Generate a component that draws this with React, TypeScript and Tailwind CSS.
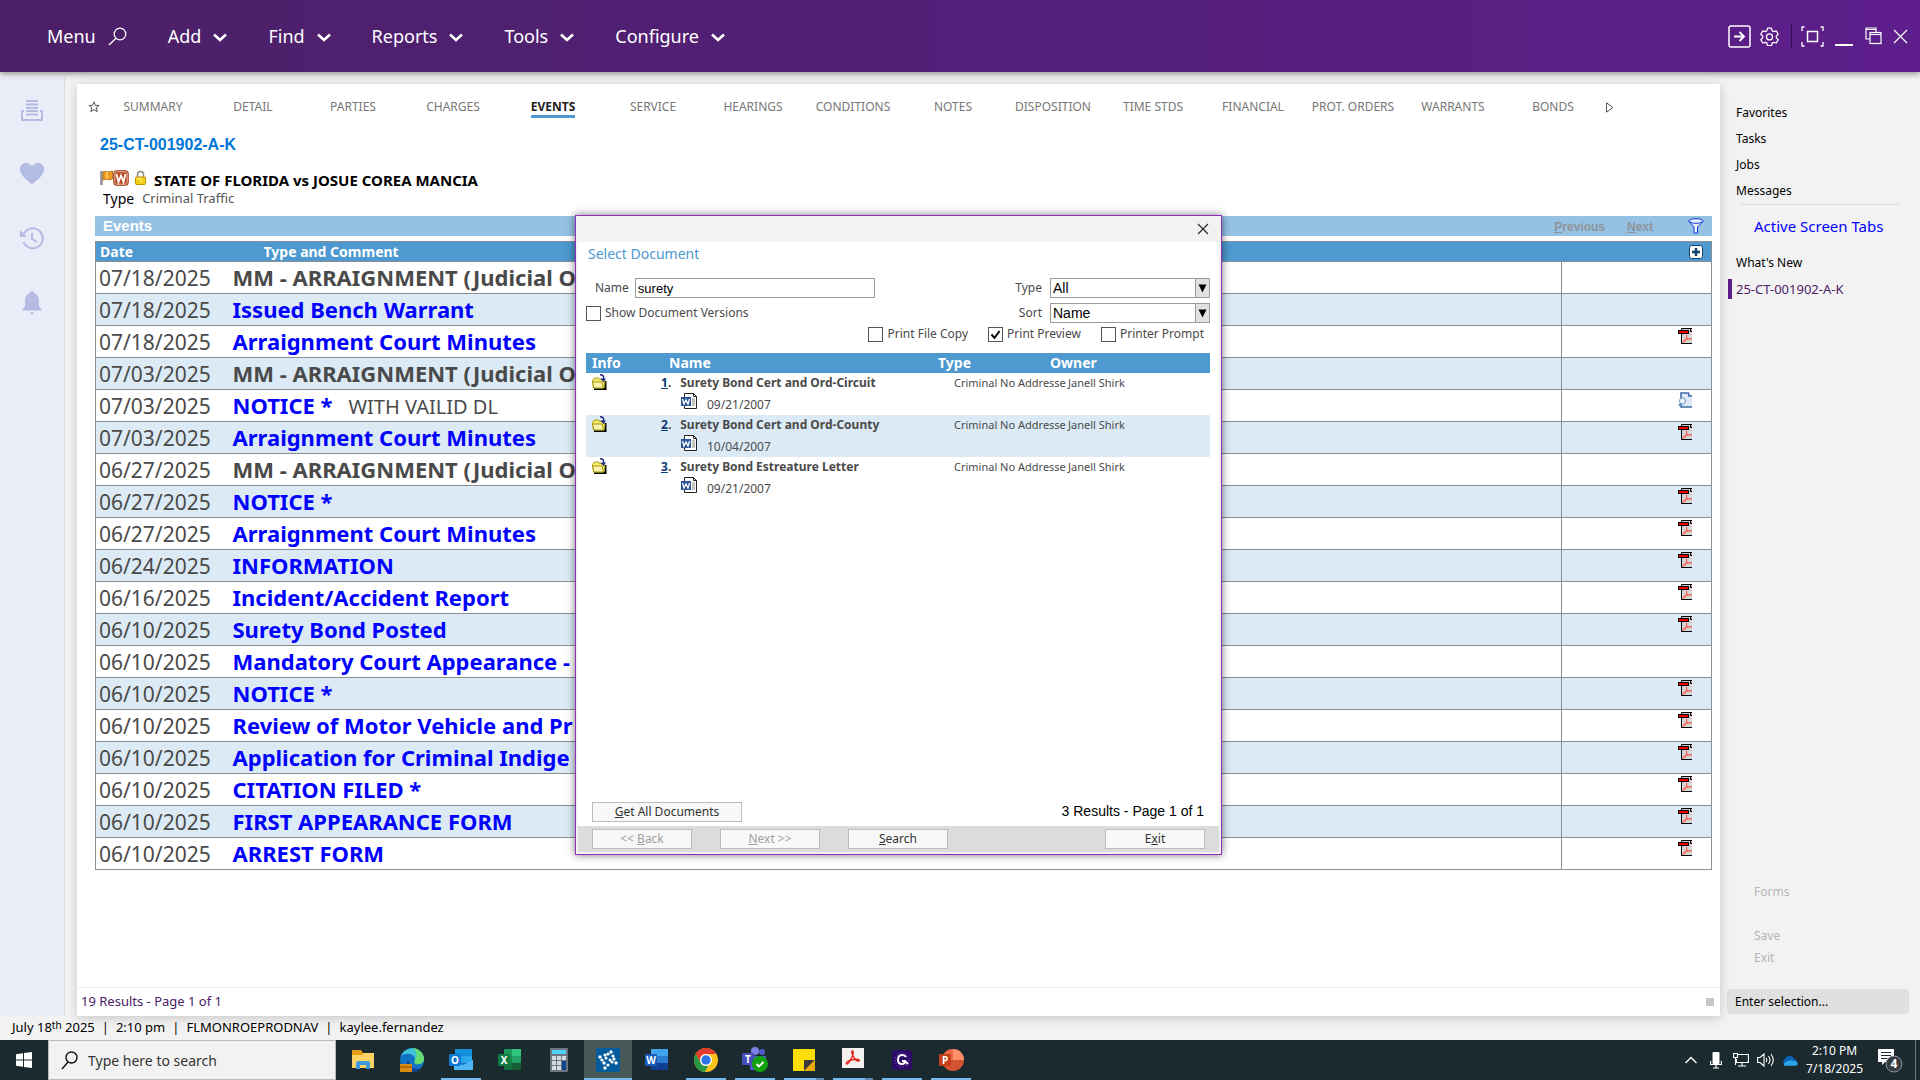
import React from 'react'

type EventRow = {
  date: string
  title: string
  note?: string
  link?: boolean
  icon?: 'pdf' | 'doc'
}

const menus = ['Add', 'Find', 'Reports', 'Tools', 'Configure']

const tabs = [
  'SUMMARY', 'DETAIL', 'PARTIES', 'CHARGES', 'EVENTS', 'SERVICE', 'HEARINGS', 'CONDITIONS',
  'NOTES', 'DISPOSITION', 'TIME STDS', 'FINANCIAL', 'PROT. ORDERS', 'WARRANTS', 'BONDS',
]

const events: EventRow[] = [
  { date: '07/18/2025', title: 'MM - ARRAIGNMENT (Judicial O' },
  { date: '07/18/2025', title: 'Issued Bench Warrant', link: true },
  { date: '07/18/2025', title: 'Arraignment Court Minutes', link: true, icon: 'pdf' },
  { date: '07/03/2025', title: 'MM - ARRAIGNMENT (Judicial O' },
  { date: '07/03/2025', title: 'NOTICE *', note: 'WITH VAILID DL', link: true, icon: 'doc' },
  { date: '07/03/2025', title: 'Arraignment Court Minutes', link: true, icon: 'pdf' },
  { date: '06/27/2025', title: 'MM - ARRAIGNMENT (Judicial O' },
  { date: '06/27/2025', title: 'NOTICE *', link: true, icon: 'pdf' },
  { date: '06/27/2025', title: 'Arraignment Court Minutes', link: true, icon: 'pdf' },
  { date: '06/24/2025', title: 'INFORMATION', link: true, icon: 'pdf' },
  { date: '06/16/2025', title: 'Incident/Accident Report', link: true, icon: 'pdf' },
  { date: '06/10/2025', title: 'Surety Bond Posted', link: true, icon: 'pdf' },
  { date: '06/10/2025', title: 'Mandatory Court Appearance -', link: true },
  { date: '06/10/2025', title: 'NOTICE *', link: true, icon: 'pdf' },
  { date: '06/10/2025', title: 'Review of Motor Vehicle and Pr', link: true, icon: 'pdf' },
  { date: '06/10/2025', title: 'Application for Criminal Indige', link: true, icon: 'pdf' },
  { date: '06/10/2025', title: 'CITATION FILED *', link: true, icon: 'pdf' },
  { date: '06/10/2025', title: 'FIRST APPEARANCE FORM', link: true, icon: 'pdf' },
  { date: '06/10/2025', title: 'ARREST FORM', link: true, icon: 'pdf' },
]

const documents = [
  { name: 'Surety Bond Cert and Ord-Circuit', date: '09/21/2007' },
  { name: 'Surety Bond Cert and Ord-County', date: '10/04/2007' },
  { name: 'Surety Bond Estreature Letter', date: '09/21/2007' },
]

/* ---------- small icons ---------- */

function Chevron() {
  return (
    <svg width="14" height="10" viewBox="0 0 14 10" fill="none" stroke="white" strokeWidth="2.6" className="mt-1">
      <path d="M1 1.500 7 7l6-5.500" />
    </svg>
  )
}

function PdfIcon() {
  return (
    <svg width="14" height="16" viewBox="0 0 14 16">
      <path d="M3.500.5H14v15H3.500z" fill="#d4d4d4" />
      <path d="M14 .5H3.500v15H14" fill="none" stroke="#000" />
      <path d="M12.500 0v3.500H14" fill="#e00" stroke="#000" />
      <rect x=".5" y="2.500" width="10" height="3" fill="#f00000" stroke="#000" />
      <path d="M8.500 6.500v3c0 2-2 4-4 5M8.500 9c1 2 3 3 5.500 1.500M5.500 12.500c3-2 5-2 8.500-1.500" fill="none" stroke="#f46a5e" strokeWidth="1.200" />
    </svg>
  )
}

function DocIcon() {
  return (
    <svg width="14" height="16" viewBox="0 0 14 16">
      <path d="M3 1h8l3 3v11H3z" fill="#dfe8f6" />
      <path d="M3 6V1h7.500l.5 3h3M3 12v3h11" fill="none" stroke="#3e6ba5" strokeWidth="1.600" />
      <circle cx="4.500" cy="9" r="3" fill="#eef6fc" stroke="#6f93bd" />
      <path d="M2.500 11.500.5 14" stroke="#6f93bd" strokeWidth="1.500" />
    </svg>
  )
}

function FolderIcon() {
  return (
    <svg width="16" height="16" viewBox="0 0 16 16">
      <path d="M2 15h11.500V7" fill="none" stroke="#000" strokeWidth="2" />
      <path d="M.5 6.500 2.500 4h4l1 1.500H12V8h1l-1 6H1.500z" fill="#f7ea6c" stroke="#a39a10" />
      <path d="M.5 8h9.500l1.500 6H2z" fill="#fdf3b0" stroke="#a39a10" />
      <path d="M8 .8c3 0 4 1 3.500 4" fill="none" stroke="#1d2a80" strokeWidth="1.500" />
      <path d="M8.500 4.500h5.500L11.500 8z" fill="#1d2a80" />
    </svg>
  )
}

function WordDocIcon() {
  return (
    <svg width="16" height="16" viewBox="0 0 16 16">
      <path d="M3.500.5h9l3 3v12h-12z" fill="#fff" stroke="#222" />
      <path d="M12.500.5v3h3" fill="none" stroke="#222" />
      <path d="M11 6h3M11 8h3M11 10h3M11 12h3" stroke="#888" />
      <rect x="0" y="4" width="10" height="9" fill="#2a5699" />
      <path d="M1.500 6l1.500 5 2-4 2 4L8.500 6" fill="none" stroke="#fff" strokeWidth="1.300" />
    </svg>
  )
}

function FlagIcon() {
  return (
    <svg width="13" height="16" viewBox="0 0 13 16">
      <path d="M1.500 1v14" stroke="#8d8d8d" strokeWidth="2.500" />
      <path d="M3 2c3-1.500 4 1 9.500-1v8C8 11 6 8 3 10z" fill="#f19a1c" stroke="#a9650c" strokeWidth=".8" />
      <path d="M7 2v7" stroke="#ffd27a" strokeWidth="1.500" />
    </svg>
  )
}

function WarrantIcon() {
  return (
    <svg width="16" height="16" viewBox="0 0 16 16">
      <rect x=".8" y=".8" width="14.400" height="14.400" rx="2.500" fill="#b8491f" stroke="#8c2f0e" />
      <rect x="1.800" y="1.800" width="12.400" height="12.400" rx="1.500" fill="none" stroke="#e9b9a4" />
      <path d="M3.500 4l2 8L8 5.500 10.500 12l2-8" fill="none" stroke="#fff" strokeWidth="1.800" />
    </svg>
  )
}

function LockIcon() {
  return (
    <svg width="11" height="16" viewBox="0 0 11 16">
      <path d="M2.500 8V4.500a3 3 0 0 1 6 0V8" fill="none" stroke="#8f8f86" strokeWidth="1.500" />
      <rect x=".5" y="7" width="10" height="7.500" rx="1" fill="#f4cf16" stroke="#b89000" />
      <path d="M2 8.500h4v4" fill="none" stroke="#fff3a0" />
    </svg>
  )
}

function FunnelIcon() {
  return (
    <svg width="16" height="16" viewBox="0 0 16 16" fill="#e8f2fb" stroke="#1430e0">
      <path d="M1 3.500 6 9v6h3.500V9L15 3.500z" />
      <ellipse cx="8" cy="3" rx="7" ry="2.300" />
    </svg>
  )
}

/* ---------- top bar ---------- */

function TopBar() {
  return (
    <header className="relative z-10 flex h-[72px] shrink-0 items-center justify-between bg-linear-to-r from-[#4b2067] via-[#531f78] to-[#5d1e8b] pr-3 pl-[47px] text-white shadow-[0_2px_6px_rgba(0,0,0,0.4)]">
      <nav className="flex items-center gap-[41px] text-[18px]">
        <button className="flex items-center gap-3">
          Menu
          <svg width="19" height="19" viewBox="0 0 19 19" fill="none" stroke="white" strokeWidth="1.300">
            <circle cx="12" cy="7" r="5.800" />
            <path d="M8 11.200 1 18" />
          </svg>
        </button>
        {menus.map((menu) => (
          <button key={menu} className="flex items-center gap-3">
            {menu}
            <Chevron />
          </button>
        ))}
      </nav>

      <div className="flex items-center">
        <button aria-label="Go" className="mr-[9px]">
          <svg width="23" height="23" viewBox="0 0 23 23" fill="none" stroke="white" strokeWidth="1.500">
            <rect x="1" y="1" width="21" height="21" rx="2" />
            <path d="M6 11.500h10M11.500 7l4.500 4.500-4.500 4.500" strokeWidth="1.800" />
          </svg>
        </button>
        <button aria-label="Settings" className="mr-3">
          <svg width="19" height="19" viewBox="0 0 24 24" fill="none" stroke="white" strokeWidth="1.600" strokeLinejoin="round">
            <path d="M9.500 1.500h5l.8 3.300 2 1.100 3.200-1 2.500 4.300-2.400 2.300v2.200l2.400 2.300-2.500 4.200-3.200-.9-2 1.100-.8 3.200h-5l-.8-3.200-2-1.100-3.200.9L1 16l2.400-2.300v-2.200L1 9.200l2.500-4.300 3.200 1 2-1.100z" />
            <circle cx="12" cy="12.500" r="3.800" />
          </svg>
        </button>
        <div className="mr-[9px] h-6 w-px bg-[#35105a]" />
        <button aria-label="Full screen" className="mr-[11px]">
          <svg width="23" height="21" viewBox="0 0 23 21" fill="none" stroke="white" strokeWidth="1.300">
            <path d="M3.500 1H1v4M19.500 1H22v4M3.500 20H1v-4M19.500 20H22v-4" />
            <rect x="6.500" y="5.500" width="10" height="10" strokeWidth="1.500" />
          </svg>
        </button>
        <button aria-label="Minimize" className="mr-3 flex h-5 items-end">
          <span className="block h-0.5 w-[18px] bg-white" />
        </button>
        <button aria-label="Restore" className="mr-[11px]">
          <svg width="17" height="18" viewBox="0 0 17 18" fill="none" stroke="white" strokeWidth="1.200">
            <path d="M5 12H1V1h10v4M1 2.500h10" />
            <rect x="5" y="5.500" width="11" height="11" />
            <path d="M5 7.500h11" />
          </svg>
        </button>
        <button aria-label="Close">
          <svg width="15" height="15" viewBox="0 0 15 15" fill="none" stroke="white" strokeWidth="1.200">
            <path d="M1 1l13 13M14 1 1 14" />
          </svg>
        </button>
      </div>
    </header>
  )
}

/* ---------- left rail ---------- */

function LeftRail() {
  return (
    <aside className="flex w-[65px] shrink-0 flex-col items-center gap-10 border-r border-[#d9dae0] bg-[#eaecf8] pt-5 text-[#b4bbe4]">
      <button aria-label="Documents">
        <svg width="24" height="24" viewBox="0 0 24 24" fill="none" stroke="currentColor" strokeWidth="2">
          <path d="M6 3h12M6 6.500h12M6 10h12M6 13h12M6 16.500h12" />
          <path d="M4 13H2v9h20v-9h-2" />
        </svg>
      </button>
      <button aria-label="Favorites">
        <svg width="24" height="24" viewBox="0 0 24 24" fill="currentColor">
          <path d="M12 22.500C7 18 0 13 0 7.500 0 3.500 2.800 1 6 1c2.500 0 4.700 1.300 6 3.500C13.300 2.300 15.500 1 18 1c3.200 0 6 2.500 6 6.500 0 5.500-7 10.500-12 15z" />
        </svg>
      </button>
      <button aria-label="History">
        <svg width="24" height="24" viewBox="0 0 24 24" fill="none" stroke="currentColor" strokeWidth="2">
          <path d="M4 7.500A10 10 0 1 1 3.500 16" />
          <path d="M0 4v7h7z" fill="currentColor" stroke="none" />
          <path d="M12 7v6l5 3" />
        </svg>
      </button>
      <button aria-label="Alerts">
        <svg width="24" height="26" viewBox="0 0 24 26" fill="currentColor">
          <path d="M12 1c1.200 0 1.800.9 1.800 2C17.500 4 19 7 19 11v5l3 4.500H2L5 16v-5c0-4 1.500-7 5.200-8 0-1.100.6-2 1.800-2zM10 22.500h4c0 1.200-.8 2-2 2s-2-.8-2-2z" />
        </svg>
      </button>
    </aside>
  )
}

/* ---------- events ---------- */

function EventsTable() {
  return (
    <table className="w-full table-fixed border-collapse border border-[#8c8f92] text-[#4a4a4a]">
      <colgroup>
        <col className="w-[134px]" />
        <col />
        <col className="w-[150px]" />
      </colgroup>
      <thead>
        <tr className="h-[19px] bg-[#4d99d0] text-left text-[14px] leading-[19px] text-white">
          <th className="p-0 pl-1">Date</th>
          <th className="p-0 pl-[34px]">Type and Comment</th>
          <th className="p-0 pr-2">
            <button aria-label="Add event" className="ml-auto block">
              <svg width="14" height="14" viewBox="0 0 14 14">
                <rect x=".5" y=".5" width="13" height="13" rx="2" fill="#fff" stroke="#12406b" />
                <path d="M7 3v8M3 7h8" stroke="#12406b" strokeWidth="2.500" />
              </svg>
            </button>
          </th>
        </tr>
      </thead>
      <tbody>
        {events.map((row, i) => (
          <tr key={i} className="h-8 border border-[#8c8f92] bg-white text-[21px] leading-[30px] even:bg-[#dceaf5]">
            <td className="p-0 pl-[3px]">{row.date}</td>
            <td className="overflow-hidden border-r border-[#8c8f92] p-0 pl-[3px] whitespace-nowrap">
              {row.link ? (
                <a href="#" className="text-[22px] leading-none font-bold text-[#0000ff]">{row.title}</a>
              ) : (
                <b className="text-[22px] leading-none">{row.title}</b>
              )}
              {row.note && <span className="ml-4 text-[20px] leading-none">{row.note}</span>}
            </td>
            <td className="p-0 pt-0.5 pr-[19px] align-top">
              {row.icon && (
                <button aria-label="Open document" className="ml-auto block">
                  {row.icon === 'pdf' ? <PdfIcon /> : <DocIcon />}
                </button>
              )}
            </td>
          </tr>
        ))}
      </tbody>
    </table>
  )
}

/* ---------- select document dialog ---------- */

function CheckField({ id, label, checked }: { id: string; label: string; checked?: boolean }) {
  return (
    <div className="flex items-center gap-1">
      <span className="relative flex">
        <input
          id={id}
          type="checkbox"
          defaultChecked={checked}
          className="peer size-[15px] appearance-none border border-[#555] bg-white"
        />
        <svg className="pointer-events-none absolute inset-0 hidden peer-checked:block" width="15" height="15" viewBox="0 0 15 15" fill="none" stroke="#000" strokeWidth="2">
          <path d="M3.500 7.500l3 3.500 5-7" />
        </svg>
      </span>
      <label htmlFor={id}>{label}</label>
    </div>
  )
}

function SelectField({ id, label, value }: { id: string; label: string; value: string }) {
  return (
    <div className="flex items-center gap-2">
      <label htmlFor={id}>{label}</label>
      <div className="relative">
        <select
          id={id}
          defaultValue={value}
          className="block h-5 w-40 appearance-none border border-[#9b9b9b] bg-white pl-0.5 font-['Liberation_Sans',sans-serif] text-[14px] leading-[18px] text-black"
        >
          <option>{value}</option>
        </select>
        <span className="pointer-events-none absolute inset-y-px right-px flex w-[14px] items-center justify-center border-l border-[#9b9b9b] bg-[#e1e1e1]">
          <svg width="9" height="9" viewBox="0 0 9 9">
            <path d="M.5.5h8l-4 8z" />
          </svg>
        </span>
      </div>
    </div>
  )
}

function DialogButton({ className, disabled, children }: { className: string; disabled?: boolean; children: React.ReactNode }) {
  return (
    <button
      disabled={disabled}
      className={`h-5 border border-[#bcbcbc] bg-[#f8f8f8] text-[12px] leading-[18px] text-[#333] disabled:text-[#a0a0a0] ${className}`}
    >
      {children}
    </button>
  )
}

function SelectDocumentDialog() {
  return (
    <div
      role="dialog"
      aria-label="Select Document"
      className="absolute inset-x-0 top-[131px] z-20 mx-auto flex h-[640px] w-[647px] flex-col border border-[#8f2fbf] bg-[#f2f2f2] p-0.5 pt-0 text-[12px] text-[#4a4a4a] shadow-[0_0_8px_rgba(0,0,0,0.55)]"
    >
      <div className="flex h-[26px] shrink-0 items-center justify-end pr-2.5">
        <button aria-label="Close dialog">
          <svg width="12" height="12" viewBox="0 0 12 12" stroke="#222" strokeWidth="1.100">
            <path d="M1 1l10 10M11 1 1 11" />
          </svg>
        </button>
      </div>

      <div className="flex flex-1 flex-col bg-white pr-[9px] pl-2">
        <h2 className="pl-0.5 text-[14px] leading-6 text-[#4d99d0]">Select Document</h2>

        <div className="mt-3 flex items-center justify-between">
          <div className="flex items-center gap-1.5 pl-[9px]">
            <label htmlFor="doc-name">Name</label>
            <input
              id="doc-name"
              type="text"
              defaultValue="surety"
              className="h-5 w-60 border border-[#9b9b9b] bg-white px-0.5 font-['Liberation_Sans',sans-serif] text-[13px] text-black"
            />
          </div>
          <SelectField id="doc-type" label="Type" value="All" />
        </div>

        <div className="mt-[5px] flex items-center justify-between">
          <CheckField id="versions" label="Show Document Versions" />
          <SelectField id="doc-sort" label="Sort" value="Name" />
        </div>

        <div className="flex h-[22px] items-center justify-end gap-5 pr-1.5">
          <CheckField id="file-copy" label="Print File Copy" />
          <CheckField id="preview" label="Print Preview" checked />
          <CheckField id="prompt" label="Printer Prompt" />
        </div>

        <table className="mt-2 w-full table-fixed border-collapse">
          <colgroup>
            <col className="w-[75px]" />
            <col />
            <col className="w-[112px]" />
            <col className="w-[160px]" />
          </colgroup>
          <thead>
            <tr className="h-5 bg-[#4d99d0] text-left text-[14px] leading-5 text-white">
              <th className="p-0 pl-1.5">Info</th>
              <th className="p-0 pl-2">Name</th>
              <th className="p-0">Type</th>
              <th className="p-0">Owner</th>
            </tr>
          </thead>
          <tbody>
            {documents.map((doc, i) => (
              <tr key={doc.name} className="h-[42px] align-top leading-5 even:bg-[#dceaf5]">
                <td className="p-0 pt-px pl-1.5"><FolderIcon /></td>
                <td className="p-0">
                  <div className="flex gap-[9px] font-bold">
                    <span><a href="#" className="text-[#0a3a78] underline">{i + 1}</a>.</span>
                    <span className="whitespace-nowrap">{doc.name}</span>
                  </div>
                  <div className="flex gap-2.5 pl-5">
                    <WordDocIcon />
                    <span className="pt-0.5">{doc.date}</span>
                  </div>
                </td>
                <td className="p-0 text-[11px]">
                  <div className="-mr-4 ml-4 whitespace-nowrap">Criminal No Addresse</div>
                </td>
                <td className="p-0 pl-[18px] text-[11px]">Janell Shirk</td>
              </tr>
            ))}
          </tbody>
        </table>

        <div className="mt-auto flex items-center justify-between px-1.5 pb-1">
          <DialogButton className="w-[150px]"><u>G</u>et All Documents</DialogButton>
          <span className="font-['Liberation_Sans',sans-serif] text-[14px] text-black">3 Results - Page 1 of 1</span>
        </div>
      </div>

      <div className="flex h-[26px] shrink-0 items-center gap-7 bg-[#dcdcdc] px-[14px]">
        <DialogButton className="w-[100px]" disabled>&lt;&lt; <u>B</u>ack</DialogButton>
        <DialogButton className="w-[100px]" disabled><u>N</u>ext &gt;&gt;</DialogButton>
        <DialogButton className="w-[100px]"><u>S</u>earch</DialogButton>
        <DialogButton className="ml-auto w-[100px]">E<u>x</u>it</DialogButton>
      </div>
    </div>
  )
}

/* ---------- case panel ---------- */

function CasePanel() {
  return (
    <main className="relative ml-3 flex min-w-0 flex-1 flex-col bg-white shadow-[0_2px_10px_rgba(0,0,0,0.18)]">
      <nav className="flex h-[46px] shrink-0 items-center text-[12px] text-[#777]">
        <button aria-label="Favorite" className="ml-[11px] w-[15px]">
          <svg width="12" height="12" viewBox="0 0 12 12" fill="none" stroke="#555">
            <path d="M6 .8l1.400 3.500 3.700.2-2.900 2.400 1 3.800L6 8.600l-3.200 2.100 1-3.800L.9 4.500l3.700-.2z" />
          </svg>
        </button>
        {tabs.map((tab) => (
          <div key={tab} className="flex w-[100px] justify-center whitespace-nowrap">
            <a
              href="#"
              className={tab === 'EVENTS' ? 'border-b-3 border-[#4d99d0] pt-[3px] leading-4 font-bold text-[#222]' : 'leading-4'}
            >
              {tab}
            </a>
          </div>
        ))}
        <button aria-label="More tabs" className="ml-[3px]">
          <svg width="8" height="11" viewBox="0 0 8 11" fill="none" stroke="#555">
            <path d="M.5.8 7 5.500.5 10.200z" />
          </svg>
        </button>
      </nav>

      <div className="pr-2 pl-[18px]">
        <h1 className="mt-[3px] pl-[5px] font-['Liberation_Sans',sans-serif] text-[16px] leading-6 font-bold text-[#0078d7]">
          25-CT-001902-A-K
        </h1>
        <div className="mt-[13px] flex h-5 items-start pl-[5px]">
          <FlagIcon />
          <WarrantIcon />
          <span className="ml-1.5"><LockIcon /></span>
          <strong className="ml-2 text-[15px] leading-[20px] text-black">STATE OF FLORIDA vs JOSUE COREA MANCIA</strong>
        </div>
        <p className="flex items-center gap-2 pl-2 text-[13px] leading-[17px] text-[#555]">
          <span className="text-[14px] text-black">Type</span>
          <span>Criminal Traffic</span>
        </p>

        <div className="mt-[9px] mb-[5px] flex h-5 items-center bg-[#95c1e3] pr-2 pl-2 font-['Liberation_Sans',sans-serif] text-[15px] font-bold">
          <span className="text-white">Events</span>
          <div className="mt-0.5 ml-auto flex gap-[22px] text-[12px] text-[#8e9499] [text-shadow:1px_1px_0_white]">
            <button><u>P</u>revious</button>
            <button><u>N</u>ext</button>
          </div>
          <button aria-label="Filter" className="ml-[35px]"><FunnelIcon /></button>
        </div>

        <EventsTable />
      </div>

      <footer className="mt-auto flex h-[29px] items-center justify-between border-t border-[#eee] pr-1.5 pl-1 text-[13px] text-[#4b2067]">
        <span>19 Results - Page 1 of 1</span>
        <span className="size-2 bg-[#c6c6c6]" />
      </footer>

      <SelectDocumentDialog />
    </main>
  )
}

/* ---------- right sidebar ---------- */

function Sidebar() {
  return (
    <aside className="flex w-[200px] shrink-0 flex-col pt-4 text-[12px] text-black">
      <nav className="flex flex-col pl-4 leading-[26px]">
        <a href="#">Favorites</a>
        <a href="#">Tasks</a>
        <a href="#">Jobs</a>
        <a href="#">Messages</a>
      </nav>
      <hr className="mr-5 ml-5 border-[#dcdcdc]" />
      <h2 className="mt-[9px] pl-[34px] text-[15px] leading-6 text-[#0000ff]">Active Screen Tabs</h2>
      <div className="mt-3 flex flex-col leading-[26px]">
        <a href="#" className="pl-4">What's New</a>
        <a href="#" className="flex items-center pl-2 text-[13px] text-[#4b2067]">
          <span className="mr-1 h-5 w-1 bg-[#5d1e8b]" />
          25-CT-001902-A-K
        </a>
      </div>
      <div className="mt-auto flex flex-col items-start pl-[34px] leading-[22px] text-[#b5b5b5]">
        <button className="mb-[22px]">Forms</button>
        <button>Save</button>
        <button>Exit</button>
      </div>
      <input
        type="text"
        aria-label="Enter selection"
        placeholder="Enter selection..."
        className="mt-5 mr-[11px] mb-0.5 ml-[7px] h-[25px] rounded-sm bg-[#e0e0e0] px-2 placeholder:text-black"
      />
    </aside>
  )
}

/* ---------- taskbar ---------- */

function OfficeIcon({ kind }: { kind: 'outlook' | 'excel' | 'word' }) {
  const palette = {
    outlook: ['#1490df', '#28a8ea', '#0f6cbd', '#0f78d4', 'O'],
    excel: ['#33c481', '#21a366', '#185c37', '#107c41', 'X'],
    word: ['#41a5ee', '#2b7cd3', '#103f91', '#185abd', 'W'],
  }[kind]
  return (
    <svg width="26" height="24" viewBox="0 0 26 24">
      <path d="M7 1h17v8H7z" fill={palette[0]} />
      <path d="M7 8h17v8H7z" fill={palette[1]} />
      <path d="M7 15h17v7H7z" fill={palette[2]} />
      {kind === 'outlook' && <path d="M6 12l9 5 10-5v10H6z" fill="#50b5f5" />}
      {kind === 'excel' && <path d="M7 1h8v21H7z" fill="#107c41" opacity=".6" />}
      <rect x="1" y="6" width="12" height="12" rx="1" fill={palette[3]} />
      <text x="7" y="15.500" fontSize="10" fontWeight="bold" fill="#fff" textAnchor="middle">{palette[4]}</text>
    </svg>
  )
}

const apps: { name: string; state?: 'open' | 'active' | 'multi'; icon: React.ReactNode }[] = [
  {
    name: 'File Explorer',
    icon: (
      <svg width="24" height="22" viewBox="0 0 24 22">
        <path d="M1 1h9l2 3h11v6H1z" fill="#e59d0e" />
        <path d="M1 6h10l2-2h10v15H1z" fill="#fdd365" />
        <path d="M5 20v-6q0-2 2-2h10q2 0 2 2v6h-4v-4H9v4z" fill="#3f97dc" />
      </svg>
    ),
  },
  {
    name: 'Edge',
    icon: (
      <svg width="26" height="26" viewBox="0 0 26 26">
        <circle cx="13" cy="13" r="12" fill="#1272c4" />
        <path d="M2 9C6 0 19-2 24 8c3 7-2 10-7 9-3-1-1-3-1-5 0-5-9-7-14-3z" fill="#3fc3d5" />
        <path d="M14 1c7 1 12 7 11 12-1 4-5 5-8 4-3-1-1-3-1-5 3-3 2-8-2-11z" fill="#66dc71" />
        <path d="M10 14c0 6 6 10 12 7-3 5-11 5-14 1-2-3-1-7 2-8z" fill="#123f8a" />
        <rect x="1" y="17" width="12" height="8" fill="#d98a12" />
        <path d="M1 20h12" stroke="#8c4f05" />
      </svg>
    ),
  },
  { name: 'Outlook', state: 'open', icon: <OfficeIcon kind="outlook" /> },
  { name: 'Excel', icon: <OfficeIcon kind="excel" /> },
  {
    name: 'Calculator',
    icon: (
      <svg width="20" height="26" viewBox="0 0 20 26">
        <rect x="1" y="1" width="18" height="24" rx="1" fill="#6d7680" />
        <rect x="3" y="3" width="14" height="4" fill="#4cd4fb" />
        <path d="M3 9h4v4H3zM8 9h4v4H8zM13 9h4v4h-4zM3 14h4v4H3zM8 14h4v4H8zM3 19h4v4H3zM8 19h4v4H8z" fill="#d5dbe2" />
        <path d="M13 14h4v9h-4z" fill="#0d4790" />
      </svg>
    ),
  },
  {
    name: 'Navigator',
    state: 'active',
    icon: (
      <svg width="24" height="24" viewBox="0 0 24 24">
        <rect width="24" height="24" fill="#045c9c" />
        <g fill="#fff">
          <circle cx="15" cy="4" r="1.700" /><circle cx="12" cy="6" r="1.600" /><circle cx="9" cy="7" r="1.600" />
          <circle cx="4" cy="9" r="1.700" /><circle cx="6" cy="12" r="1.600" /><circle cx="8" cy="15" r="1.700" />
          <circle cx="10" cy="10" r="1.500" /><circle cx="17" cy="8" r="1.600" /><circle cx="18" cy="11" r="1.600" />
          <circle cx="20" cy="15" r="1.700" /><circle cx="16" cy="14" r="1.600" /><circle cx="12" cy="17" r="1.600" />
          <circle cx="14" cy="12" r="1.500" /><circle cx="9" cy="20" r="1.700" />
        </g>
      </svg>
    ),
  },
  { name: 'Word', icon: <OfficeIcon kind="word" /> },
  {
    name: 'Chrome',
    state: 'open',
    icon: (
      <svg width="24" height="24" viewBox="0 0 24 24">
        <circle cx="12" cy="12" r="12" fill="#fcc31e" />
        <path d="M1.600 6A12 12 0 0 1 22.400 6H12a6 6 0 0 0-5.200 9z" fill="#e33b2e" />
        <path d="M1.600 6l5.200 9A6 6 0 0 0 12 18l2 0-3.200 6A12 12 0 0 1 1.600 6z" fill="#279847" />
        <circle cx="12" cy="12" r="6" fill="#fff" />
        <circle cx="12" cy="12" r="4.700" fill="#2a74e8" />
      </svg>
    ),
  },
  {
    name: 'Teams',
    state: 'open',
    icon: (
      <svg width="28" height="26" viewBox="0 0 28 26">
        <circle cx="14" cy="4" r="4" fill="#7b83eb" />
        <circle cx="21" cy="5" r="3" fill="#5059c9" />
        <path d="M9 9h16v8l-6 6H9z" fill="#5059c9" />
        <rect x="1" y="6" width="12" height="12" rx="1" fill="#464eb8" />
        <text x="7" y="15.500" fontSize="10" fontWeight="bold" fill="#fff" textAnchor="middle">T</text>
        <circle cx="19" cy="17" r="8" fill="#13a10e" />
        <path d="M15.500 17l2.500 2.500 4.500-4.500" fill="none" stroke="#fff" strokeWidth="1.800" />
      </svg>
    ),
  },
  {
    name: 'Sticky Notes',
    state: 'multi',
    icon: (
      <svg width="22" height="22" viewBox="0 0 22 22">
        <rect width="22" height="22" fill="#fedd05" />
        <path d="M11 11h11L11 22z" fill="#3b3b3b" />
        <path d="M22 11v11H11z" fill="#e5a90a" />
      </svg>
    ),
  },
  {
    name: 'Acrobat',
    state: 'multi',
    icon: (
      <svg width="22" height="20" viewBox="0 0 22 20" className="mb-1">
        <rect width="22" height="20" fill="#f4f2f1" />
        <path d="M10 3c2-1 1 4 0 6s-3 7-5 7 0-3 4-4 7-1 8 0-1 2-3 0-5-7-4-9z" fill="none" stroke="#e32119" strokeWidth="1.400" />
      </svg>
    ),
  },
  {
    name: 'GoTo',
    state: 'open',
    icon: (
      <svg width="20" height="20" viewBox="0 0 20 20">
        <rect width="20" height="20" rx="3" fill="#2b0b66" />
        <circle cx="10" cy="10" r="7" fill="none" stroke="#8d62da" strokeDasharray="1 2" />
        <path d="M14 7c-1-2-3-2-4-2-3 0-4 2-4 5s1 4 4 4c2 0 3-1 3-3h-3M13 11l3 3" fill="none" stroke="#fff" strokeWidth="2" />
      </svg>
    ),
  },
  {
    name: 'PowerPoint',
    state: 'open',
    icon: (
      <svg width="25" height="24" viewBox="0 0 25 24">
        <circle cx="14" cy="12" r="11" fill="#d35230" />
        <path d="M14 1a11 11 0 0 1 11 11H14z" fill="#ff8f6b" />
        <path d="M14 1v11H3A11 11 0 0 1 14 1z" fill="#ed6c47" />
        <rect x="0" y="6" width="12" height="12" rx="1" fill="#c43e1c" />
        <text x="6" y="15.500" fontSize="10" fontWeight="bold" fill="#fff" textAnchor="middle">P</text>
      </svg>
    ),
  },
]

function Taskbar() {
  return (
    <div className="flex h-10 shrink-0 bg-[#1b2a2e] text-white">
      <button aria-label="Start" className="flex w-12 items-center justify-center">
        <svg width="16" height="16" viewBox="0 0 16 16" fill="#fff">
          <path d="M0 2.200 7 1.300v6.300H0zM8 1.100 16 0v7.600H8zM0 8.500h7v6.200l-7-.9zM8 8.500h8V16l-8-1.100z" />
        </svg>
      </button>
      <div className="flex w-72 items-center gap-2.5 border border-[#b9bcbd] bg-[#f2f2f2] pl-3 text-[#222]">
        <svg width="17" height="19" viewBox="0 0 17 19" fill="none" stroke="#111" strokeWidth="1.400">
          <circle cx="10.500" cy="6.500" r="5.500" />
          <path d="M7 11 1 18" />
        </svg>
        <input
          type="text"
          aria-label="Type here to search"
          placeholder="Type here to search"
          className="min-w-0 flex-1 bg-transparent text-[14px] placeholder:text-[#333]"
        />
      </div>
      <div className="ml-[3px] flex gap-px">
        {apps.map((app) => (
          <button
            key={app.name}
            aria-label={app.name}
            className={`relative flex w-12 items-center justify-center ${app.state === 'active' ? 'bg-[#4a5759]' : ''}`}
          >
            {app.icon}
            {app.state && (
              <span className={`absolute bottom-0 flex h-0.5 bg-[#76b9ed] ${app.state === 'active' ? 'inset-x-0' : 'inset-x-1'}`}>
                {app.state === 'multi' && <span className="ml-auto h-0.5 w-2 bg-[#5a8ab3]" />}
              </span>
            )}
          </button>
        ))}
      </div>

      <div className="ml-auto flex items-center">
        <svg width="12" height="8" viewBox="0 0 12 8" fill="none" stroke="#fff" strokeWidth="1.300" className="mr-[13px]">
          <path d="M.5 7 6 1.500 11.500 7" />
        </svg>
        <svg width="12" height="17" viewBox="0 0 12 17" className="mr-[11px]">
          <rect x="2.500" y="0" width="7" height="12" rx="1" fill="#fff" />
          <path d="M.6 9v3.500h10.800V9M6 13v3M3 16h6" fill="none" stroke="#fff" strokeWidth="1.200" />
        </svg>
        <svg width="16" height="14" viewBox="0 0 16 14" fill="none" stroke="#fff" strokeWidth="1.100" className="mr-2">
          <path d="M5 1.500h10.400v8H3.500V6M.5.5h4v4h-4zM2.500 4.500V12M9 9.500v3M5 13h8" />
        </svg>
        <svg width="17" height="14" viewBox="0 0 17 14" fill="none" stroke="#fff" strokeWidth="1.100" className="mr-2">
          <path d="M.6 4.500h2.500L7 1v12L3.100 9.500H.6zM9 5q1.500 2 0 4M11.500 3q3 4 0 8M14 1q4.500 6 0 12" />
        </svg>
        <svg width="16" height="11" viewBox="0 0 16 11" className="mr-2">
          <path d="M4 10a3.500 3.500 0 0 1-1-6.500A5 5 0 0 1 12 3.500 3.500 3.500 0 0 1 13 10z" fill="#0d62b8" />
          <path d="M2.500 10.700C1 9 3 7 5 6.500c3-2 6 0 7-.5 4 0 5 4 2 4.700z" fill="#28a8ea" />
        </svg>
        <div className="text-center text-[12px] leading-[18px]">
          <div>2:10 PM</div>
          <div>7/18/2025</div>
        </div>
        <button aria-label="Notifications" className="mr-3 ml-[14px] flex">
          <svg width="26" height="26" viewBox="0 0 26 26">
            <path d="M1 2h16v13H8l-3 3v-3H1z" fill="#fff" />
            <path d="M4 5.500h10M4 8.500h10M4 11.500h6" stroke="#1b2a2e" />
            <circle cx="17" cy="17" r="8" fill="#333d40" stroke="#8d9598" />
            <text x="17" y="21" fontSize="12" fontWeight="bold" fill="#fff" textAnchor="middle">4</text>
          </svg>
        </button>
        <div className="mr-1 h-10 w-px bg-[#6c7678]" />
      </div>
    </div>
  )
}

export default function App() {
  return (
    <div className="flex h-screen flex-col overflow-hidden bg-[#f2f2f2] font-['Noto_Sans',sans-serif]">
      <TopBar />
      <div className="flex min-h-0 flex-1">
        <div className="flex pt-1.5">
          <LeftRail />
        </div>
        <div className="flex min-w-0 flex-1 pt-3">
          <CasePanel />
          <Sidebar />
        </div>
      </div>
      <div className="flex h-6 shrink-0 items-center gap-[7px] pl-3 text-[13px] text-black">
        <span>July 18<sup className="top-[-3px] text-[10px]">th</sup> 2025</span>
        <span>|</span>
        <span>2:10 pm</span>
        <span>|</span>
        <span>FLMONROEPRODNAV</span>
        <span>|</span>
        <span>kaylee.fernandez</span>
      </div>
      <Taskbar />
    </div>
  )
}
